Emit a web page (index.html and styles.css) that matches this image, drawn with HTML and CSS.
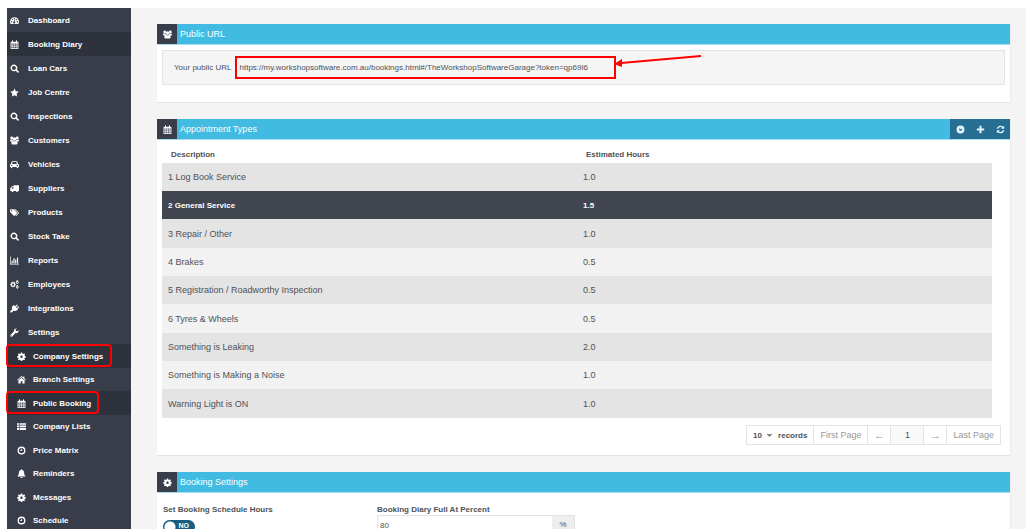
FILE: index.html
```
<!DOCTYPE html>
<html lang="en">

<head>
    <meta charset="UTF-8">
    <meta name="viewport" content="width=device-width, initial-scale=1.0">
    <title>Public Booking</title>
    <link rel="stylesheet" href="styles.css">
</head>

<body>
    <!-- Icon set -->
    <svg class="icon-set" aria-hidden="true">
        <symbol id="i-dashboard" viewBox="0 0 16 16"><path fill-rule="evenodd" d="M8 2a8 8 0 0 0-6.800 12h13.600A8 8 0 0 0 8 2zM3 9a1.200 1.200 0 1 1 0 2.400A1.200 1.200 0 0 1 3 9zm1.600-3.800a1.200 1.200 0 1 1 0 2.400 1.200 1.200 0 0 1 0-2.400zM8 3.500a1.200 1.200 0 1 1 0 2.400 1.200 1.200 0 0 1 0-2.400zm3.800 1.700a1.200 1.200 0 1 1 0 2.400 1.200 1.200 0 0 1 0-2.400zM13 9a1.200 1.200 0 1 1 0 2.400A1.200 1.200 0 0 1 13 9zM9.600 6.300l-1 3.700a1.900 1.900 0 1 1-1.200-.3l1-3.700z"/></symbol>
        <symbol id="i-calendar" viewBox="0 0 16 16"><path fill-rule="evenodd" d="M1 4a1 1 0 0 1 1-1h1.500V1.500a1 1 0 0 1 2 0V3h5V1.500a1 1 0 0 1 2 0V3H14a1 1 0 0 1 1 1v11a1 1 0 0 1-1 1H2a1 1 0 0 1-1-1zM2.400 6.400v1.900h2V6.400zm3.200 0v1.900h1.900V6.400zm3 0v1.900h1.900V6.400zm3 0v1.900h2V6.400zM2.400 9.500v1.900h2V9.500zm3.200 0v1.900h1.900V9.500zm3 0v1.900h1.900V9.500zm3 0v1.900h2V9.500zM2.400 12.600v1.900h2v-1.900zm3.200 0v1.900h1.900v-1.900zm3 0v1.900h1.900v-1.900zm3 0v1.900h2v-1.900z"/></symbol>
        <symbol id="i-search" viewBox="0 0 16 16"><path fill-rule="evenodd" d="M7 1a6 6 0 1 0 3.300 11l3 3a1.400 1.400 0 0 0 2-2l-3-3A6 6 0 0 0 7 1zm0 2.400a3.600 3.600 0 1 1 0 7.200 3.600 3.600 0 0 1 0-7.200z"/></symbol>
        <symbol id="i-star" viewBox="0 0 16 16"><path d="M8 .8l2.300 4.800 5.200.7-3.800 3.700.9 5.200L8 12.700l-4.600 2.500.9-5.200L.5 6.300l5.200-.7z"/></symbol>
        <symbol id="i-users" viewBox="0 0 16 16"><circle cx="3" cy="3.500" r="2.500"/><circle cx="13" cy="3.500" r="2.500"/><circle cx="8" cy="5.500" r="3.200"/><path d="M0 9.500C0 7 .6 6 1.500 6c1 .7 2 .7 3 .3.100 1 .4 1.600 1 2.200-1 .1-1.700.4-2.300 1.200H1c-.6 0-1-.1-1-.2zM16 9.500C16 7 15.400 6 14.500 6c-1 .7-2 .7-3 .3-.1 1-.4 1.600-1 2.200 1 .1 1.700.4 2.300 1.200H15c.6 0 1-.1 1-.2zM2.500 13c0-2.600 1.200-4.400 3-4.400 1.500 1.300 3.500 1.300 5 0 1.800 0 3 1.800 3 4.400 0 1.500-.8 2-2 2h-7c-1.200 0-2-.5-2-2z"/></symbol>
        <symbol id="i-car" viewBox="0 0 16 16"><path fill-rule="evenodd" d="M4.500 2h7c1 0 1.600.6 1.900 1.500L14.200 7c1.100.1 1.800.9 1.800 2v3.500h-1.500v1a1.300 1.300 0 0 1-2.600 0v-1H4.100v1a1.300 1.300 0 0 1-2.600 0v-1H0V9c0-1.100.7-1.900 1.800-2l.8-3.500C2.900 2.600 3.500 2 4.500 2zM4.600 3.500L3.800 7h8.400l-.8-3.500zM3 8.500a1.200 1.200 0 1 0 0 2.400 1.200 1.200 0 0 0 0-2.400zm10 0a1.200 1.200 0 1 0 0 2.400 1.200 1.200 0 0 0 0-2.400z"/></symbol>
        <symbol id="i-truck" viewBox="0 0 16 16"><path fill-rule="evenodd" d="M6.500 2H16v10.500h-1.600a1.900 1.900 0 0 1-3.800 0H6.400a1.900 1.900 0 0 1-3.800 0H.5V8c0-1 .3-1.400 1-2l1.200-1.300c.5-.5.8-.7 1.600-.7h2.200zM4.500 5.400L2 8h4V5.400z"/></symbol>
        <symbol id="i-tags" viewBox="0 0 16 16"><path fill-rule="evenodd" d="M0 3.200C0 2.500.5 2 1.200 2H5c.7 0 1.400.3 2 .8l5.300 5.400c.5.500.5 1 0 1.500l-4 4c-.5.500-1 .5-1.500 0L1 8C.3 7.400 0 6.800 0 6zM2.700 3.500a1.200 1.200 0 1 0 0 2.400 1.200 1.200 0 0 0 0-2.400z"/><path d="M7 2h1.200c.8 0 1.500.3 2 .8l5.300 5.400c.5.500.5 1 0 1.500l-4 4c-.6.500-1.200.4-1.700 0l3.700-4c.7-.8.7-1.500 0-2.200z"/></symbol>
        <symbol id="i-chart" viewBox="0 0 16 16"><path d="M0 1h1.200v12.800H16V15H0zM2.800 8.500h2v4.300h-2zM6 4h2v8.800H6zM9.200 6.200h2v6.600h-2zM12.400 2.800h2v10h-2z"/></symbol>
        <symbol id="i-cog" viewBox="0 0 16 16"><path fill-rule="evenodd" d="M6.800 1h2.400l.4 2 1.300.5L12.600 2.400l1.700 1.700-1.100 1.600.5 1.300 2 .4v2.300l-2 .4-.5 1.300 1.100 1.600-1.700 1.700-1.700-1.100-1.300.5-.4 2H6.800l-.4-2-1.300-.5-1.700 1.100L1.700 13l1.100-1.600-.5-1.300-2-.4V7.400l2-.4.5-1.300L1.700 4.100l1.700-1.700 1.700 1.100L6.400 3zM8 6.300a2.200 2.200 0 1 0 0 4.400 2.200 2.200 0 0 0 0-4.400z"/></symbol>
        <symbol id="i-cogs" viewBox="0 0 16 16"><path fill-rule="evenodd" d="M4.500 3h2l.3 1.600 1.400-.9 1.300 1.300-.9 1.500 1.600.4v2l-1.600.4.9 1.400-1.300 1.300-1.400-.9L6.500 13h-2l-.4-1.700-1.400.9-1.300-1.300.9-1.500L.5 9V7l1.700-.4-.9-1.500 1.300-1.300 1.500.9zM5.500 6a2 2 0 1 0 0 4 2 2 0 0 0 0-4zM12 .5h2l.2 1.200 1.300.8-.6 1.200.6 1.300-1.200.8L13.800 7h-1.500l-.5-1.200-1.400-.6.6-1.400-.6-1.200 1.300-.9zM13 2.700a1.100 1.100 0 1 0 0 2.200 1.100 1.100 0 0 0 0-2.200zM12 9h2l.2 1.200 1.300.8-.6 1.200.6 1.300-1.200.8-.5 1.200h-1.500l-.5-1.200-1.400-.6.6-1.400-.6-1.200 1.300-.9zM13 11.200a1.100 1.100 0 1 0 0 2.200 1.100 1.100 0 0 0 0-2.200z"/></symbol>
        <symbol id="i-plug" viewBox="0 0 16 16"><path d="M9.200 4.200l2.600-2.900a1 1 0 0 1 1.500 1.400l-2.600 2.900 1.500 1.500 2.600-2.500a1 1 0 0 1 1.400 1.500L13.500 8.600l.8.9-1.200 1.200c-2 2-4.700 2.500-6.800 1.200L3 15H.5v-2.300l3.300-3.300C2.700 7.300 3.200 5 5 3.200L6.700 1.600z"/></symbol>
        <symbol id="i-wrench" viewBox="0 0 16 16"><path fill-rule="evenodd" d="M15.300 4.200c.6 3.300-2.300 6-5.600 4.900L4 14.900a1.900 1.900 0 0 1-2.800-2.700L7 6.400C5.900 3 8.700.2 12.200.8L9.900 3l.4 2.300 2.400.5zM2.700 12.700a.8.800 0 1 0 0 1.600.8.800 0 0 0 0-1.600z"/></symbol>
        <symbol id="i-home" viewBox="0 0 16 16"><path d="M8 1.800l3 2.600V2.500h2.200v3.800L16 8.700l-.9 1L8 3.700l-7.100 6-.9-1z"/><path d="M8 5l5.500 4.600V15H9.600v-4H6.400v4H2.500V9.600z"/></symbol>
        <symbol id="i-list" viewBox="0 0 16 16"><path d="M0 2h3.500v3H0zM4.500 2H16v3H4.500zM0 6h3.500v3H0zM4.500 6H16v3H4.500zM0 10h3.500v4H0zM4.500 10H16v4H4.500z"/></symbol>
        <symbol id="i-clock" viewBox="0 0 16 16"><path fill-rule="evenodd" d="M8 1a7 7 0 1 0 0 14A7 7 0 0 0 8 1zm0 2.400a4.600 4.600 0 1 1 0 9.200 4.600 4.600 0 0 1 0-9.200z"/><path d="M7.500 4.800H9V9H5.500V7.700h2z"/></symbol>
        <symbol id="i-bell" viewBox="0 0 16 16"><path d="M8 .5c.6 0 1 .4 1 1v.4c2.500.5 3.700 2.400 3.700 4.800 0 3 .8 4.500 2.300 5.800v.8H1v-.8C2.500 11.200 3.300 9.700 3.300 6.700c0-2.400 1.200-4.300 3.700-4.800v-.4c0-.6.4-1 1-1zM6 14h4a2 2 0 0 1-4 0z"/></symbol>
        <symbol id="i-compass" viewBox="0 0 16 16"><path fill-rule="evenodd" d="M8 1a7 7 0 1 0 0 14A7 7 0 0 0 8 1zM5.500 5.500l1 5 4-.8V5.800L8.500 8z"/></symbol>
        <symbol id="i-plus" viewBox="0 0 16 16"><path d="M6.200 1.500h3.600v4.700h4.700v3.600H9.800v4.700H6.200V9.800H1.500V6.200h4.700z"/></symbol>
        <symbol id="i-refresh" viewBox="0 0 16 16"><path d="M1.200 6.800C1.800 3.500 4.600 1.200 8 1.200c1.800 0 3.500.7 4.800 1.900L14.500 1.500v5.300H9.200l1.900-1.900A4.400 4.400 0 0 0 3.800 6.800zM14.800 9.200c-.6 3.300-3.400 5.600-6.800 5.600a7 7 0 0 1-4.800-1.900l-1.700 1.600V9.200h5.300l-1.900 1.900a4.400 4.400 0 0 0 7.300-1.900z"/></symbol>
    </svg>

    <div class="layout">
        <nav class="sidebar">
            <ul class="menu">
                <li><a href="#"><svg class="icon"><use href="#i-dashboard"/></svg>Dashboard</a></li>
                <li><a href="#" class="active"><svg class="icon"><use href="#i-calendar"/></svg>Booking Diary</a></li>
                <li><a href="#"><svg class="icon"><use href="#i-search"/></svg>Loan Cars</a></li>
                <li><a href="#"><svg class="icon"><use href="#i-star"/></svg>Job Centre</a></li>
                <li><a href="#"><svg class="icon"><use href="#i-search"/></svg>Inspections</a></li>
                <li><a href="#"><svg class="icon"><use href="#i-users"/></svg>Customers</a></li>
                <li><a href="#"><svg class="icon"><use href="#i-car"/></svg>Vehicles</a></li>
                <li><a href="#"><svg class="icon"><use href="#i-truck"/></svg>Suppliers</a></li>
                <li><a href="#"><svg class="icon"><use href="#i-tags"/></svg>Products</a></li>
                <li><a href="#"><svg class="icon"><use href="#i-search"/></svg>Stock Take</a></li>
                <li><a href="#"><svg class="icon"><use href="#i-chart"/></svg>Reports</a></li>
                <li><a href="#"><svg class="icon"><use href="#i-cogs"/></svg>Employees</a></li>
                <li><a href="#"><svg class="icon"><use href="#i-plug"/></svg>Integrations</a></li>
                <li><a href="#"><svg class="icon"><use href="#i-wrench"/></svg>Settings</a></li>
            </ul>
            <ul class="menu submenu">
                <li><a href="#" class="active"><svg class="icon"><use href="#i-cog"/></svg>Company Settings</a><span class="mark mark-company"></span></li>
                <li><a href="#"><svg class="icon"><use href="#i-home"/></svg>Branch Settings</a></li>
                <li><a href="#" class="active"><svg class="icon"><use href="#i-calendar"/></svg>Public Booking</a><span class="mark mark-booking"></span></li>
                <li><a href="#"><svg class="icon"><use href="#i-list"/></svg>Company Lists</a></li>
                <li><a href="#"><svg class="icon"><use href="#i-clock"/></svg>Price Matrix</a></li>
                <li><a href="#"><svg class="icon"><use href="#i-bell"/></svg>Reminders</a></li>
                <li><a href="#"><svg class="icon"><use href="#i-cog"/></svg>Messages</a></li>
                <li><a href="#"><svg class="icon"><use href="#i-clock"/></svg>Schedule</a></li>
            </ul>
        </nav>

        <main class="content">
            <section class="panel">
                <header class="panel-head">
                    <span class="panel-icon"><svg class="icon"><use href="#i-users"/></svg></span>
                    <h2>Public URL</h2>
                </header>
                <div class="panel-body url-body">
                    <div class="well">
                        <span>Your public URL</span>
                        <span class="url">https://my.workshopsoftware.com.au/bookings.html#/TheWorkshopSoftwareGarage?token=qp69I6
                            <svg class="arrow" viewBox="0 0 88 14"><path d="M87 2L7 9" stroke="#ff0000" stroke-width="2"/><path d="M0 10l8-5v8z" fill="#ff0000"/></svg>
                        </span>
                    </div>
                </div>
            </section>

            <section class="panel">
                <header class="panel-head">
                    <span class="panel-icon"><svg class="icon"><use href="#i-calendar"/></svg></span>
                    <h2>Appointment Types</h2>
                    <div class="tools">
                        <button type="button" aria-label="View"><svg class="icon"><use href="#i-compass"/></svg></button>
                        <button type="button" aria-label="Add"><svg class="icon"><use href="#i-plus"/></svg></button>
                        <button type="button" aria-label="Refresh"><svg class="icon"><use href="#i-refresh"/></svg></button>
                    </div>
                </header>
                <div class="panel-body types-body">
                    <table class="types">
                        <thead>
                            <tr><th>Description</th><th>Estimated Hours</th></tr>
                        </thead>
                        <tbody>
                            <tr><td>1 Log Book Service</td><td>1.0</td></tr>
                            <tr class="selected"><td>2 General Service</td><td>1.5</td></tr>
                            <tr><td>3 Repair / Other</td><td>1.0</td></tr>
                            <tr><td>4 Brakes</td><td>0.5</td></tr>
                            <tr><td>5 Registration / Roadworthy Inspection</td><td>0.5</td></tr>
                            <tr><td>6 Tyres &amp; Wheels</td><td>0.5</td></tr>
                            <tr><td>Something is Leaking</td><td>2.0</td></tr>
                            <tr><td>Something is Making a Noise</td><td>1.0</td></tr>
                            <tr><td>Warning Light is ON</td><td>1.0</td></tr>
                        </tbody>
                    </table>
                    <div class="pager">
                        <label class="page-size">
                            <select><option>10</option><option>25</option><option>50</option></select>
                            <span>records</span>
                        </label>
                        <button type="button">First Page</button>
                        <button type="button" class="step">←</button>
                        <button type="button" class="current">1</button>
                        <button type="button" class="step">→</button>
                        <button type="button">Last Page</button>
                    </div>
                </div>
            </section>

            <section class="panel">
                <header class="panel-head">
                    <span class="panel-icon"><svg class="icon"><use href="#i-cog"/></svg></span>
                    <h2>Booking Settings</h2>
                </header>
                <div class="panel-body settings-body">
                    <div class="field">
                        <label for="scheduleHours">Set Booking Schedule Hours</label>
                        <div class="switch">
                            <input type="checkbox" id="scheduleHours">
                            <span>NO</span>
                        </div>
                    </div>
                    <div class="field">
                        <label for="fullPercent">Booking Diary Full At Percent</label>
                        <div class="input-group">
                            <input type="text" id="fullPercent" value="80">
                            <span class="addon">%</span>
                        </div>
                    </div>
                </div>
            </section>
        </main>
    </div>
</body>

</html>
```
FILE: styles.css
```
:root {
    --side: #393d4a;
    --side-active: #2e323c;
    --blue: #41bbe1;
    --dark-blue: #266f93;
    --page: #f4f4f4;
    --line: #e4e4e4;
    --text: #4d5259;
    --red: #ff0000;
}

* {
    box-sizing: border-box;
}

body {
    margin: 0;
    height: 100vh;
    padding: 8px 0 1px 7px;
    overflow: hidden;
    background-color: #ffffff;
    color: var(--text);
    font-family: "Liberation Sans", Arial, sans-serif;
    font-size: 8px;
}

button,
input,
select {
    font: inherit;
    color: inherit;
}

.icon-set {
    display: none;
}

.icon {
    width: 9px;
    height: 9px;
    flex: none;
    fill: currentColor;
}

.layout {
    display: flex;
    height: 100%;
    background-color: var(--page);
}

/* Sidebar */
.sidebar {
    flex: 0 0 124px;
    height: 100%;
    background-color: var(--side);
}

.menu {
    list-style: none;
    margin: 0;
    padding: 0;
}

.menu li {
    position: relative;
    height: 24px;
}

.menu a {
    display: flex;
    align-items: center;
    gap: 9px;
    height: 100%;
    padding-left: 3px;
    color: #ffffff;
    font-weight: bold;
    text-decoration: none;
}

.menu a.active {
    background-color: var(--side-active);
}

.submenu li:nth-child(even) {
    height: 23px;
}

.submenu a {
    gap: 7px;
    padding-left: 10px;
}

.mark {
    position: absolute;
    top: 0;
    left: -1px;
    height: 23px;
    border: 2px solid var(--red);
    border-radius: 4px;
}

.mark-company {
    width: 106px;
}

.mark-booking {
    width: 93px;
}

/* Panels */
.content {
    flex: 1;
    height: 100%;
    padding: 16px 16px 0 26px;
    overflow: hidden;
}

.panel {
    margin-bottom: 16px;
    background-color: #ffffff;
    border-bottom: 1px solid var(--line);
    box-shadow: 1px 0 0 #ececec;
}

.panel-head {
    display: flex;
    height: 21px;
    background-color: var(--blue);
    border-bottom: 1px solid #a6dff0;
    color: #ffffff;
}

.panel-icon {
    display: flex;
    align-items: center;
    justify-content: center;
    width: 20px;
    background-color: var(--side);
}

.panel-head h2 {
    margin: 0 0 0 3px;
    font-size: 9px;
    font-weight: normal;
    line-height: 20px;
}

.tools {
    display: flex;
    margin-left: auto;
    background-color: var(--dark-blue);
}

.tools button {
    display: flex;
    align-items: center;
    justify-content: center;
    width: 20px;
    padding: 0;
    border: none;
    background: none;
    color: #e3f4fa;
}

.url-body {
    padding: 5px 5px 17px;
}

.well {
    display: flex;
    align-items: center;
    gap: 3px;
    height: 35px;
    padding-left: 11px;
    background-color: #f5f5f5;
    border: 1px solid var(--line);
}

.url {
    position: relative;
    width: 381px;
    height: 23px;
    padding: 0 3px;
    border: 2px solid var(--red);
    line-height: 20px;
}

.arrow {
    position: absolute;
    top: -4px;
    left: 100%;
    width: 88px;
    height: 14px;
}

/* Appointment types */
.types-body {
    padding: 6px 5px 10px;
}

.types {
    width: calc(100% - 13px);
    border-collapse: collapse;
    table-layout: fixed;
}

.types th {
    height: 17px;
    padding: 0 9px;
    text-align: left;
}

.types td {
    height: 28px;
    padding: 0 6px;
    font-size: 9px;
}

.types tr:nth-child(3n) td {
    height: 29px;
}

.types tbody tr {
    background-color: #f2f2f2;
}

.types tbody tr:nth-child(odd) {
    background-color: #e4e4e4;
}

.types tbody tr.selected {
    background-color: #414550;
    color: #ffffff;
}

.types tr.selected td {
    font-size: 8px;
    font-weight: bold;
}

.pager {
    display: flex;
    justify-content: flex-end;
    margin: 7px 4px 0 0;
}

.pager button,
.page-size {
    height: 20px;
    padding: 0 6px;
    border: 1px solid var(--line);
    border-left: none;
    background-color: #ffffff;
    color: #999999;
    font-size: 9px;
}

.pager .page-size {
    display: flex;
    align-items: center;
    gap: 6px;
    border-left: 1px solid var(--line);
    color: var(--text);
    font-size: 8px;
    font-weight: bold;
}

.page-size select {
    width: 19px;
    padding: 0;
    border: none;
    appearance: none;
    background: conic-gradient(from -45deg at 50% 100%, #888888 90deg, transparent 0) no-repeat right center / 5px 3px;
}

.pager .step {
    width: 23px;
    padding: 0;
    font-size: 11px;
}

.pager .current {
    width: 33px;
    background-color: #f9f9f9;
    color: var(--text);
}

/* Booking settings */
.settings-body {
    display: flex;
    padding: 12px 6px;
}

.field {
    flex: 0 0 214px;
}

.field label {
    display: block;
    font-weight: bold;
    line-height: 10px;
}

.switch {
    position: relative;
    width: 32px;
    height: 13px;
    margin-top: 5px;
}

.switch input {
    appearance: none;
    display: block;
    width: 100%;
    height: 100%;
    margin: 0;
    border-radius: 7px;
    background: radial-gradient(circle at 7px 7px, #ffffff 5px, #1b5f80 6px);
}

.switch span {
    position: absolute;
    top: 2px;
    right: 6px;
    color: #ffffff;
    font-size: 7px;
    font-weight: bold;
    line-height: 8px;
}

.input-group {
    display: flex;
    width: 198px;
    height: 20px;
    border: 1px solid var(--line);
}

.input-group input {
    flex: 1;
    min-width: 0;
    padding: 0 2px;
    border: none;
}

.addon {
    width: 22px;
    background-color: #eeeeee;
    line-height: 18px;
    text-align: center;
}
```
